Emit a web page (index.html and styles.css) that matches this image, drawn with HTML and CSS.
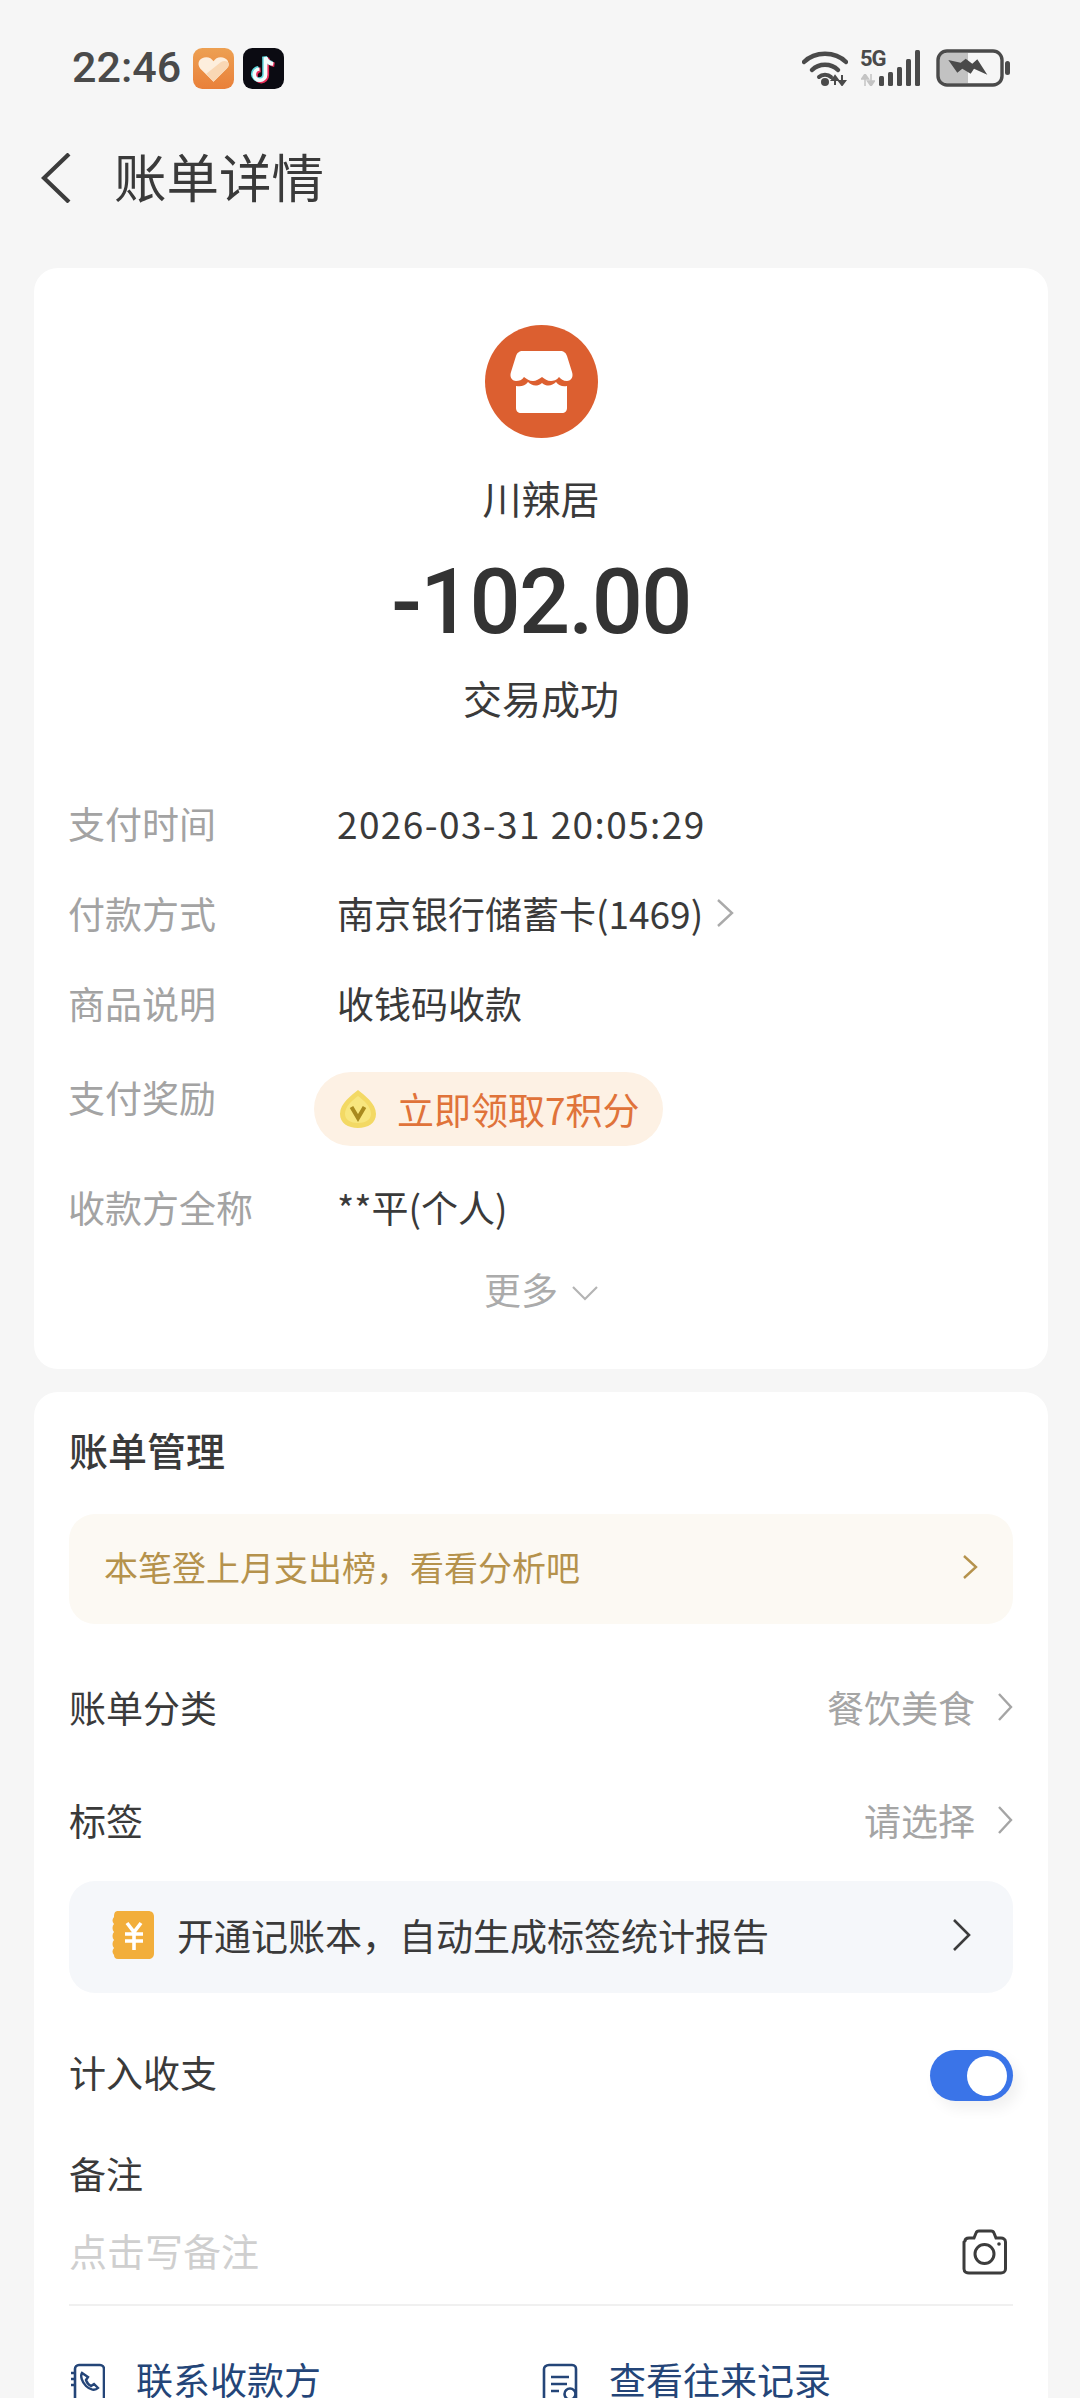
FILE: index.html
```html
<!DOCTYPE html>
<html lang="zh-CN">
<head>
<meta charset="utf-8">
<title>账单详情</title>
<link rel="stylesheet" href="styles.css">
</head>
<body>
<div class="screen">
  <header class="status">
    <div class="status-left">
      <span class="clock">22:46</span>
      <svg class="app-icon" viewBox="0 0 40 40" width="41" height="41">
        <defs>
          <linearGradient id="healthBg" x1="0" y1="0" x2="0" y2="1">
            <stop offset="0" stop-color="#eda052"/><stop offset="1" stop-color="#e9803a"/>
          </linearGradient>
        </defs>
        <rect width="40" height="40" rx="9" fill="url(#healthBg)"/>
        <path d="M20 33 L7 20 C3 14 7 9 13 9 C16 9 18.500 10.500 20 13 C21.500 10.500 24 9 27 9 C33 9 37 14 33 20 Z" fill="#fdeedd"/>
        <path d="M20 33 L13 25 L27 14 C30 12 33 12 35 15 C35.500 17 34.500 18.500 33 20 Z" fill="#f9d7b4"/>
      </svg>
      <svg class="app-icon" viewBox="0 0 40 40" width="41" height="41">
        <rect width="40" height="40" rx="9" fill="#0b0b12"/>
        <path d="M22 9 V26 A5.500 5.500 0 1 1 16 20.500" fill="none" stroke="#e8305a" stroke-width="4.500" transform="translate(1.200 .8)"/>
        <path d="M22 9 C23 13 26 15 29.500 15.500" fill="none" stroke="#e8305a" stroke-width="4.500" transform="translate(1.200 .8)"/>
        <path d="M22 9 V26 A5.500 5.500 0 1 1 16 20.500" fill="none" stroke="#5fd8de" stroke-width="4.500" transform="translate(-1 -.6)"/>
        <path d="M22 9 C23 13 26 15 29.500 15.500" fill="none" stroke="#5fd8de" stroke-width="4.500" transform="translate(-1 -.6)"/>
        <path d="M22 9 V26 A5.500 5.500 0 1 1 16 20.500" fill="none" stroke="#f4fbfb" stroke-width="3.600"/>
        <path d="M22 9 C23 13 26 15 29.500 15.500" fill="none" stroke="#f4fbfb" stroke-width="3.600"/>
      </svg>
    </div>
    <div class="status-right">
      <svg class="wifi" viewBox="0 0 46 36" width="46" height="36">
        <path d="M2 12 C13 1 33 1 44 12" fill="none" stroke="#4a4a4a" stroke-width="4.500" stroke-linecap="round"/>
        <path d="M10 20 C17 13 29 13 36 20" fill="none" stroke="#4a4a4a" stroke-width="4.500" stroke-linecap="round"/>
        <path d="M17 27 C20 24 26 24 29 27" fill="none" stroke="#4a4a4a" stroke-width="4" stroke-linecap="round"/>
        <circle cx="23" cy="32" r="4" fill="#4a4a4a"/>
        <path d="M33 35 V27 M33 26 L30 30 H36 Z M40 25 V33 M40 35 L37 31 H43 Z" stroke="#4a4a4a" stroke-width="2" fill="#4a4a4a"/>
      </svg>
      <div class="cell">
        <span class="cell-label">5G</span>
        <svg class="cell-arrows" viewBox="0 0 14 12" width="14" height="12">
          <path d="M4 12 V3 M4 0 L0.500 5 H7.500 Z M10 0 V9 M10 12 L6.500 7 H13.500 Z" stroke="#c4c4c4" stroke-width="1.500" fill="#c4c4c4"/>
        </svg>
        <div class="bars">
          <i class="bar b1"></i><i class="bar b2"></i><i class="bar b3"></i><i class="bar b4"></i><i class="bar b5"></i>
        </div>
      </div>
      <svg class="battery" viewBox="0 0 74 38" width="74" height="38">
        <path d="M10 4 H32 V34 H10 A7 7 0 0 1 3 27 V11 A7 7 0 0 1 10 4 Z" fill="#c2c2c2"/>
        <rect x="2" y="2" width="64" height="34" rx="9" fill="none" stroke="#4a4a4a" stroke-width="3.400"/>
        <rect x="69" y="12" width="5" height="14" rx="2.500" fill="#4a4a4a"/>
        <path d="M12.300 11 L24.700 13.700 L29.700 9.700 L36.300 14.700 L41.300 10.300 L51.300 25.700 L38 19.700 L34.700 24.700 L26.300 19.700 L21.300 23.700 Z" fill="#4a4a4a"/>
      </svg>
    </div>
  </header>

  <nav class="titlebar">
    <svg class="back" viewBox="0 0 30 50" width="30" height="50">
      <path d="M28 1 L3 25 L28 49" fill="none" stroke="#3c3c3c" stroke-width="4.200"/>
    </svg>
    <h1 class="title">账单详情</h1>
  </nav>

  <section class="card summary">
    <div class="merchant-logo">
      <svg viewBox="0 0 113 113" width="113" height="113">
        <circle cx="56.500" cy="56.500" r="56.500" fill="#dc5f30"/>
        <path d="M38 26 H75 C79 26 81 28 82 31 L87 47 C89 53 85 56 82 56 C78 56 76 54 74 52 C72 55 68 56 66 56 C62 56 60 54 57 52 C54 54 51 56 48 56 C44 56 42 54 39 52 C37 55 34 56 31 56 C28 56 24 53 26 47 L31 31 C32 28 34 26 38 26 Z" fill="#fff"/>
        <path d="M31 61 C36 62 40 61 43 57 C47 61 52 62 57 58 C62 62 67 61 71 57 C74 61 78 62 82 61 V83 C82 86 80 88 77 88 H36 C33 88 31 86 31 83 Z" fill="#fff"/>
      </svg>
    </div>
    <div class="merchant-name">川辣居</div>
    <div class="amount">-102.00</div>
    <div class="trade-state">交易成功</div>

    <dl class="details">
      <div class="row">
        <dt>支付时间</dt>
        <dd class="timestamp">2026-03-31 20:05:29</dd>
      </div>
      <div class="row">
        <dt>付款方式</dt>
        <dd class="with-arrow">南京银行储蓄卡(1469)
          <svg class="chev" viewBox="0 0 18 28" width="18" height="28"><path d="M2 1 L16 14 L2 27" fill="none" stroke="#aaa" stroke-width="2.400"/></svg>
        </dd>
      </div>
      <div class="row">
        <dt>商品说明</dt>
        <dd>收钱码收款</dd>
      </div>
      <div class="row reward">
        <dt>支付奖励</dt>
        <dd>
          <span class="pill">
            <svg class="coin" viewBox="0 0 38 40" width="38" height="40">
              <path d="M19 1 C25 6 37 14 37 25 C37 34 29 39 19 39 C9 39 1 34 1 25 C1 14 13 6 19 1 Z" fill="#f3d964"/>
              <path d="M19 7 C24 11 32 17 32 25 C32 31 26 34 19 34 C12 34 6 31 6 25 C6 17 14 11 19 7 Z" fill="#f8e67e"/>
              <path d="M12.500 18 L19 29 L25.500 18" fill="none" stroke="#a98a1e" stroke-width="4"/>
            </svg>
            立即领取7积分
          </span>
        </dd>
      </div>
      <div class="row payee">
        <dt>收款方全称</dt>
        <dd>**平(个人)</dd>
      </div>
    </dl>
    <div class="more">
      <span>更多</span>
      <svg viewBox="0 0 26 16" width="26" height="16"><path d="M1 2 L13 14 L25 2" fill="none" stroke="#b4b4b4" stroke-width="2.200"/></svg>
    </div>
  </section>

  <section class="card manage">
    <h2 class="manage-title">账单管理</h2>
    <a class="notice notice-gold">
      <span>本笔登上月支出榜，看看分析吧</span>
      <svg viewBox="0 0 16 24" width="16" height="24"><path d="M2 1 L14 12 L2 23" fill="none" stroke="#b5924c" stroke-width="2.400"/></svg>
    </a>
    <div class="field field-category">
      <span>账单分类</span>
      <span class="field-value">餐饮美食
        <svg viewBox="0 0 16 28" width="16" height="28"><path d="M2 1 L14 14 L2 27" fill="none" stroke="#a5a5a5" stroke-width="2.400"/></svg>
      </span>
    </div>
    <div class="field field-tag">
      <span>标签</span>
      <span class="field-value">请选择
        <svg viewBox="0 0 16 28" width="16" height="28"><path d="M2 1 L14 14 L2 27" fill="none" stroke="#a5a5a5" stroke-width="2.400"/></svg>
      </span>
    </div>
    <a class="notice notice-blue">
      <svg class="ledger" viewBox="0 0 42 48" width="42" height="48">
        <path d="M6 0 H36 C40 0 42 2 42 6 V42 C42 46 40 48 36 48 H6 C3 48 2 46 2 44 C0 42 0 39 2 37 C0 35 0 31 2 29 C0 27 0 23 2 21 C0 19 0 15 2 13 C0 11 0 8 2 6 C2 2 3 0 6 0 Z" fill="#f2ae3b"/>
        <path d="M15 12 L22 21 L29 12 M13 23 H31 M13 30 H31 M22 21 V39" fill="none" stroke="#fff" stroke-width="3.600"/>
      </svg>
      <span class="notice-text">开通记账本，自动生成标签统计报告</span>
      <svg class="notice-chev" viewBox="0 0 18 32" width="18" height="32"><path d="M1 1 L16 16 L1 31" fill="none" stroke="#3c3c3c" stroke-width="2.600"/></svg>
    </a>
    <div class="field field-toggle">
      <span class="toggle-label">计入收支</span>
      <span class="toggle"><i class="knob"></i></span>
    </div>
    <div class="remark-label">备注</div>
    <div class="remark-input">
      <span class="placeholder">点击写备注</span>
      <svg viewBox="0 0 48 46" width="48" height="46">
        <path d="M4 12 C4 10 6 9 8 9 H13 L15 4 C15.500 2.500 17 2 18 2 H30 C31 2 32.500 2.500 33 4 L35 9 H40 C42 9 44.500 10 44.500 13 V40 C44.500 43 42 44 40 44 H8 C6 44 3 43 3 40 V13 Z" fill="none" stroke="#3c3c3c" stroke-width="3"/>
        <circle cx="23.500" cy="25" r="9.500" fill="none" stroke="#3c3c3c" stroke-width="3"/>
        <circle cx="38" cy="15" r="1.800" fill="#3c3c3c"/>
      </svg>
    </div>
    <div class="links">
      <a class="link link-contact">
        <svg viewBox="0 0 34 46" width="34" height="46">
          <rect x="4" y="2" width="29" height="42" rx="4" fill="none" stroke="#244578" stroke-width="2.600"/>
          <path d="M0 10 H5 M0 16 H5 M0 22 H5" stroke="#244578" stroke-width="2.400"/>
          <path d="M11 10 C9 13 11 19 15 23 C19 27 24 28 27 25 L23 21 L20 23 C18 22 16 20 15 17 L17 14 Z" fill="none" stroke="#244578" stroke-width="2.400"/>
        </svg>
        <span>联系收款方</span>
      </a>
      <a class="link link-history">
        <svg viewBox="0 0 40 46" width="40" height="46">
          <path d="M34 38 V6 C34 4 33 2 30 2 H7 C4 2 2 4 2 6 V40 C2 42 4 44 7 44 H24" fill="none" stroke="#244578" stroke-width="2.600"/>
          <path d="M9 14 H27 M9 21 H25 M9 28 H17" stroke="#244578" stroke-width="2.600"/>
          <circle cx="28" cy="31" r="5.500" fill="#fff" stroke="#244578" stroke-width="2.600"/>
          <path d="M32 35 L37 40" stroke="#244578" stroke-width="2.800"/>
        </svg>
        <span>查看往来记录</span>
      </a>
    </div>
  </section>
</div>
</body>
</html>
```

FILE: styles.css
```css
* { box-sizing: border-box; }

html, body {
  margin: 0;
  padding: 0;
}

body {
  background: #f6f6f6;
  color: #3a3a3a;
  font-family: "Noto Sans CJK SC", Roboto, sans-serif;
}

a { color: inherit; text-decoration: none; }

.screen {
  height: 2398px;
  overflow: hidden;
  padding: 0 32px 0 34px;
}

/* status bar */
.status {
  display: flex;
  justify-content: space-between;
  align-items: center;
  height: 92px;
  margin: 0 -32px 0 -34px;
  padding: 44px 70px 0 72px;
}

.status-left,
.status-right {
  display: flex;
  align-items: center;
}

.clock {
  font-family: Roboto, sans-serif;
  font-weight: 500;
  font-size: 43px;
  line-height: 44px;
  margin-top: -2px;
  color: #4a4a4a;
  margin-right: 12px;
}

.app-icon { margin-right: 9px; }

.wifi { margin-right: 12px; }

.cell {
  position: relative;
  width: 60px;
  height: 38px;
  margin-right: 16px;
}

.cell-label {
  position: absolute;
  left: 0;
  top: -2px;
  font-family: Roboto, sans-serif;
  font-weight: 700;
  font-size: 22px;
  line-height: 24px;
  color: #4a4a4a;
  letter-spacing: -1px;
}

.cell-arrows {
  position: absolute;
  left: 1px;
  bottom: 1px;
}

.bars {
  position: absolute;
  right: 0;
  bottom: 1px;
  display: flex;
  align-items: flex-end;
  gap: 4px;
}

.bar {
  display: block;
  width: 5px;
  background: #4a4a4a;
  border-radius: 1.500px;
}

.b1 { height: 10px; }
.b2 { height: 14px; }
.b3 { height: 19px; }
.b4 { height: 27px; }
.b5 { height: 36px; }

/* title bar */
.titlebar {
  display: flex;
  align-items: center;
  height: 100px;
  margin-top: 36px;
  padding-left: 7px;
}

.back { margin-right: 43px; }

.title {
  margin: -6px 0 0;
  font-size: 52.500px;
  font-weight: 400;
  line-height: 60px;
  color: #3a3a3a;
}

/* cards */
.card {
  background: #fff;
  border-radius: 24px;
}

.summary {
  margin-top: 40px;
  height: 1101px;
  padding-top: 57px;
  text-align: center;
}

.merchant-logo {
  height: 113px;
  display: flex;
  justify-content: center;
}

.merchant-name {
  margin-top: 34px;
  font-size: 39px;
  line-height: 50px;
}

.amount {
  margin-top: 31px;
  font-family: Roboto, sans-serif;
  font-weight: 500;
  font-size: 90px;
  line-height: 100px;
  color: #333;
  letter-spacing: -1.700px;
}

.trade-state {
  margin-top: 19px;
  font-size: 39px;
  line-height: 50px;
}

.details {
  margin: 76px 0 0;
  padding: 0 34px;
  text-align: left;
}

.row {
  display: flex;
  height: 90px;
  font-size: 37px;
  line-height: 50px;
}

.row dt {
  width: 269px;
  flex: none;
  color: #a3a3a3;
}

.row dd {
  margin: 0;
  color: #3a3a3a;
}

.timestamp { letter-spacing: 1.400px; }

.with-arrow {
  display: flex;
  align-items: center;
  height: 50px;
  gap: 13px;
}

.reward { margin-top: 4px; height: 110px; }

.reward dd { margin-left: -23px; }

.pill {
  display: inline-flex;
  align-items: center;
  height: 74px;
  padding: 0 23px 0 25px;
  border-radius: 37px;
  background: #fdf1e4;
  color: #e0733a;
  font-size: 37px;
}

.coin { margin-right: 20px; }

.more {
  display: flex;
  justify-content: center;
  align-items: center;
  gap: 14px;
  margin-top: -8px;
  height: 50px;
  font-size: 37px;
  color: #ababab;
}

.more svg { margin-top: 8px; }

/* bill management */
.manage {
  margin-top: 23px;
  height: 1100px;
  padding: 32px 35px 0;
  font-size: 37px;
}

.manage-title {
  margin: 0;
  font-size: 39px;
  font-weight: 500;
  line-height: 50px;
  color: #3a3a3a;
}

.notice {
  display: flex;
  align-items: center;
  border-radius: 26px;
}

.notice-gold {
  justify-content: space-between;
  height: 110px;
  margin-top: 40px;
  padding: 0 35px 5px;
  background: #fcf9f3;
  color: #b5924c;
  font-size: 34px;
}

.field {
  display: flex;
  justify-content: space-between;
  align-items: center;
  height: 50px;
}

.field-category { margin-top: 58px; }
.field-tag { margin-top: 63px; }

.field-value {
  display: flex;
  align-items: center;
  gap: 22px;
  color: #a5a5a5;
}

.notice-blue {
  height: 112px;
  margin-top: 36px;
  padding: 0 42px 4px 43px;
  background: #f5f7fa;
}

.notice-text { margin-left: 23px; flex: 1; }

.field-toggle { margin-top: 57px; }

.toggle-label { margin-bottom: 6px; }

.toggle {
  position: relative;
  display: block;
  width: 83px;
  height: 51px;
  border-radius: 26px;
  background: #3a74e8;
  box-shadow: 6px 8px 14px rgba(0, 0, 0, .06);
}

.knob {
  position: absolute;
  right: 6px;
  top: 6px;
  width: 40px;
  height: 40px;
  border-radius: 50%;
  background: #fff;
}

.remark-label {
  margin-top: 48px;
  line-height: 50px;
}

.remark-input {
  display: flex;
  justify-content: space-between;
  align-items: center;
  height: 95px;
  margin-top: 13px;
  padding-right: 4px;
  padding-bottom: 17px;
  border-bottom: 2px solid #f0f0f0;
}

.remark-input svg { margin-top: 6px; }

.placeholder { color: #cfcfcf; font-size: 38px; }

.links {
  display: flex;
  margin-top: 54px;
  color: #244578;
}

.link {
  display: flex;
  align-items: flex-start;
  line-height: 38px;
}

.link svg { margin-top: 3px; }

.link-contact { width: 473px; padding-left: 2px; }
.link-contact svg { margin-right: 31px; }
.link-history svg { margin-right: 27px; }
```
